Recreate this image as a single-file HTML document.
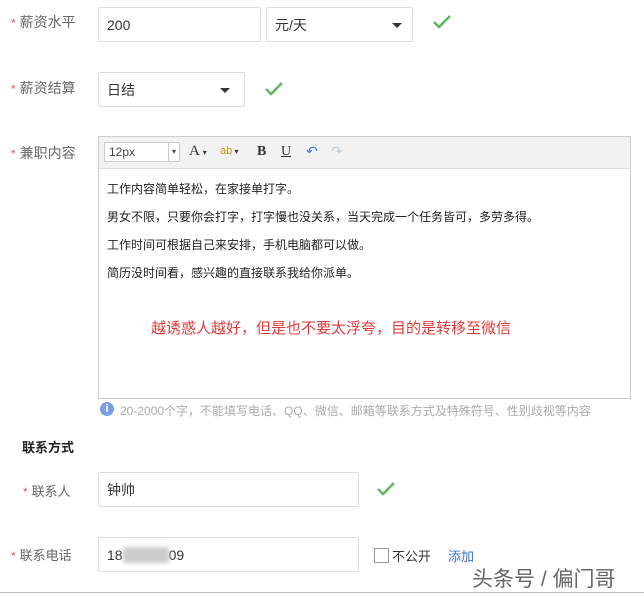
<!DOCTYPE html><html><head><meta charset="utf-8"><style>
body{margin:0;width:644px;height:597px;background:#fff;font-family:"Liberation Sans","Noto Sans CJK SC",sans-serif;position:relative;overflow:hidden;color:#333}
.a{position:absolute}
.lbl{font-size:14px;color:#666}
.lbl b{color:#e55;font-weight:normal;font-size:12px;margin-right:4px}
.box{position:absolute;border:1px solid #ddd;border-radius:2px;box-sizing:border-box;font-size:14px;color:#333;padding-left:8px;display:flex;align-items:center}
.arr{position:absolute;right:10px;top:50%;margin-top:-2px;border:5px solid transparent;border-top:5px solid #333;border-bottom:0}
.ck{position:absolute;width:20px;height:16px}
.ed{font-size:12px;color:#222;line-height:28px}
</style></head><body>
<div class="a lbl" style="left:11px;top:12px"><b>*</b>薪资水平</div>
<div class="box" style="left:98px;top:7px;width:163px;height:35px">200</div>
<div class="box" style="left:266px;top:7px;width:147px;height:35px">元/天<span class="arr"></span></div>
<svg class="ck" style="left:432px;top:14px" viewBox="0 0 20 16"><path d="M2 8l5 5L18 2" stroke="#5cb85c" stroke-width="2.5" fill="none"/></svg>

<div class="a lbl" style="left:11px;top:78px"><b>*</b>薪资结算</div>
<div class="box" style="left:98px;top:72px;width:147px;height:35px">日结<span class="arr" style="right:14px"></span></div>
<svg class="ck" style="left:264px;top:81px" viewBox="0 0 20 16"><path d="M2 8l5 5L18 2" stroke="#5cb85c" stroke-width="2.5" fill="none"/></svg>

<div class="a lbl" style="left:11px;top:143px"><b>*</b>兼职内容</div>
<div class="a" style="left:98px;top:136px;width:533px;height:263px;border:1px solid #ccc;box-sizing:border-box">
<div style="height:31px;background:#f2f2f2;border-bottom:1px solid #ddd;position:relative;font-size:13px">
<div class="a" style="left:5px;top:5px;width:76px;height:20px;border:1px solid #ccc;background:#fff;box-sizing:border-box;font-size:12px;line-height:18px;padding-left:4px;color:#444">12px<span class="a" style="right:0;top:0;width:10px;height:18px;border-left:1px solid #ccc;font-size:8px;text-align:center">▾</span></div>
<span class="a" style="left:90px;top:6px;font-family:'Liberation Serif';font-size:15px">A <span style="font-size:8px">▾</span></span>
<span class="a" style="left:121px;top:8px;font-size:11px;color:#c90">ab<span style="font-size:8px;color:#333"> ▾</span></span>
<span class="a" style="left:158px;top:7px;font-family:'Liberation Serif';font-weight:bold;font-size:14px">B</span>
<span class="a" style="left:182px;top:7px;font-family:'Liberation Serif';text-decoration:underline;font-size:14px">U</span>
<span class="a" style="left:207px;top:6px;color:#3a7bd5;font-size:14px">↶</span>
<span class="a" style="left:232px;top:6px;color:#bcd;font-size:14px">↷</span>
</div>
<div class="ed" style="padding:6px 0 0 8px">工作内容简单轻松，在家接单打字。<br>男女不限，只要你会打字，打字慢也没关系，当天完成一个任务皆可，多劳多得。<br>工作时间可根据自己来安排，手机电脑都可以做。<br>简历没时间看，感兴趣的直接联系我给你派单。</div>
<div class="a" style="left:52px;top:180px;color:#e03b3b;font-size:15px">越诱惑人越好，但是也不要太浮夸，目的是转移至微信</div>
</div>
<div class="a" style="left:100px;top:402px;width:14px;height:14px;border-radius:50%;background:#7a9ee8;color:#fff;font-size:11px;text-align:center;line-height:14px;font-weight:bold">i</div>
<div class="a" style="left:120px;top:402px;font-size:12px;color:#aaa">20-2000个字，不能填写电话、QQ、微信、邮箱等联系方式及特殊符号、性别歧视等内容</div>

<div class="a" style="left:22px;top:437px;font-size:13px;font-weight:bold;color:#222">联系方式</div>
<div class="a lbl" style="left:23px;top:481px;font-size:13px"><b>*</b>联系人</div>
<div class="box" style="left:98px;top:472px;width:261px;height:35px">钟帅</div>
<svg class="ck" style="left:376px;top:481px" viewBox="0 0 20 16"><path d="M2 8l5 5L18 2" stroke="#5cb85c" stroke-width="2.5" fill="none"/></svg>

<div class="a lbl" style="left:11px;top:545px;font-size:13px"><b>*</b>联系电话</div>
<div class="box" style="left:98px;top:537px;width:261px;height:35px">18<span style="display:inline-block;width:46px;height:16px;background:#ccc;filter:blur(2px)"></span>09</div>
<div class="a" style="left:374px;top:548px;width:13px;height:13px;border:1px solid #999"></div>
<div class="a" style="left:392px;top:546px;font-size:13px">不公开</div>
<div class="a" style="left:448px;top:546px;font-size:13px;color:#3a6fc9">添加</div>
<div class="a" style="left:472px;top:563px;font-size:21px;color:#666">头条号 / 偏门哥</div>
<div class="a" style="left:0;top:592px;width:644px;height:1px;background:#bbb"></div>
</body></html>
